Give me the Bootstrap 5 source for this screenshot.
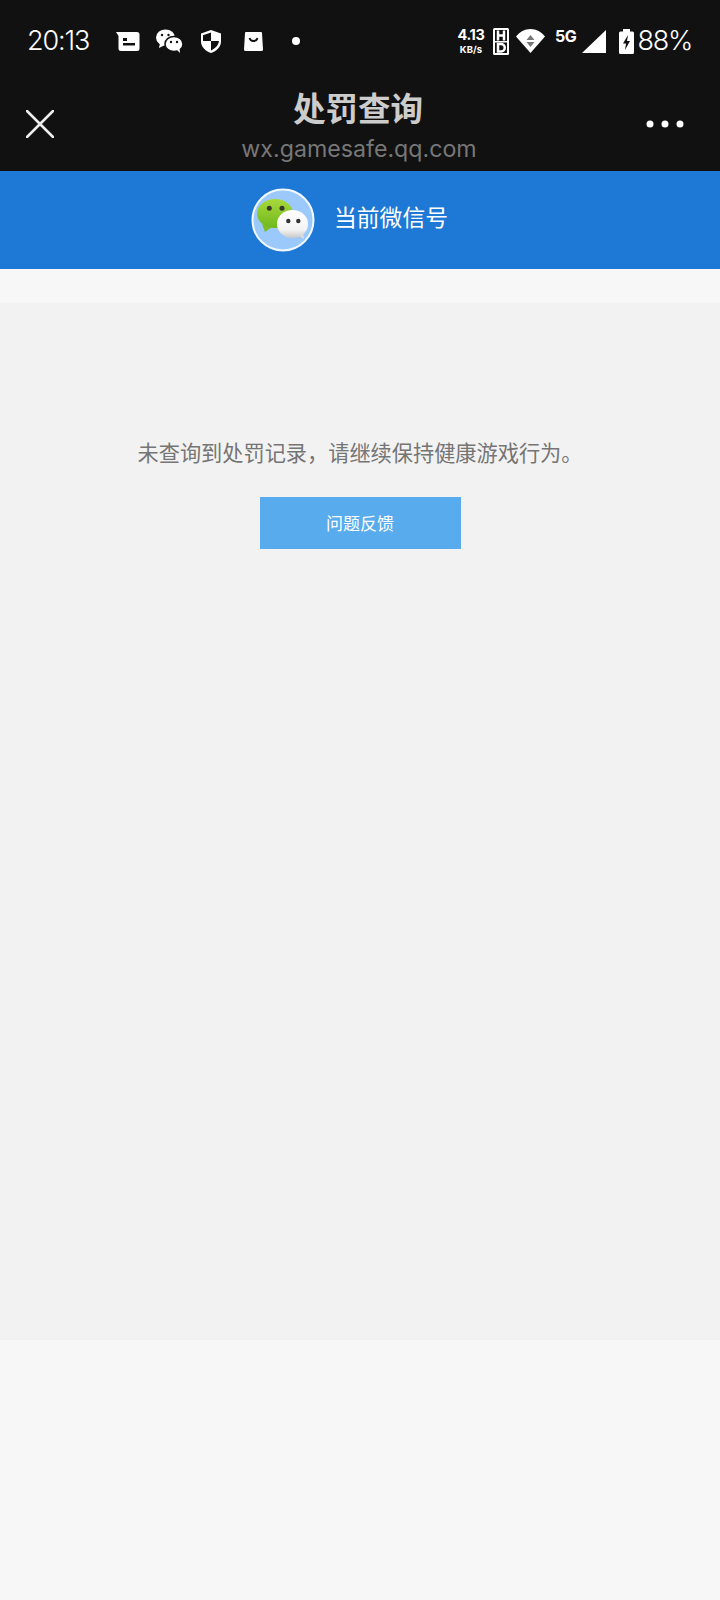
<!DOCTYPE html>
<html lang="zh-CN">
<head>
    <meta charset="UTF-8">
    <meta name="viewport" content="width=device-width, initial-scale=1.0">
    <title>处罚查询</title>
    <link href="https://cdn.jsdelivr.net/npm/bootstrap@5.3.2/dist/css/bootstrap.min.css" rel="stylesheet">
    <style>
        body {
            background: #f7f7f7;
            font-family: "Noto Sans CJK SC", "Noto Sans", sans-serif;
            min-height: 1600px;
        }
        svg { display: block; flex: none; }
        .top-dark { background: #111; height: 171px; }
        .status-row { height: 82px; padding: 0 28px 0 27px; color: #fff; font-family: Inter, sans-serif; }
        .clock { font-size: 27px; font-weight: 300; letter-spacing: -1.1px; width: 89px; }
        .speed { width: 32px; margin-right: 6px; line-height: 1; text-align: center; font-weight: 700; }
        .speed-num { font-size: 14.5px; letter-spacing: -.4px; }
        .speed-unit { font-size: 9.5px; margin-top: 3px; }
        .net-5g { font-size: 16px; font-weight: 700; margin-top: -11px; letter-spacing: -.3px; margin-right: 5px; margin-left: 10px; }
        .battery-pct { font-size: 27px; font-weight: 300; letter-spacing: -1.3px; margin-left: 4px; }
        .shield-icon { margin-left: 18px; }
        .bag-icon { margin-left: 23px; }
        .status-dot { margin-left: 29px; }
        .charge-icon { margin-left: 13px; }
        .wifi-icon { margin-left: 7px; }
        .app-row { display: grid; grid-template-columns: 1fr auto 1fr; height: 89px; padding: 0 36px 0 26px; }
        .app-icon { margin-top: -5px; }
        .page-title { font-size: 32.5px; font-weight: 700; color: #ccc; line-height: 40px; margin-top: 5px; text-align: center; margin-right: 2px; }
        .page-host { font-family: Inter, sans-serif; font-size: 23.2px; color: #777; line-height: 32px; margin-top: 6px; text-align: center; }
        .account-band { background: #1e78d6; height: 98px; padding-right: 21px; }
        .account-name { font-size: 22.8px; color: #fff; margin-left: 19px; margin-top: -6px; line-height: 1; }
        .gap-band { height: 34px; }
        .result-panel { background: #f2f2f2; height: 1037px; padding-top: 131px; }
        .result-text { font-size: 21.2px; line-height: 36px; color: #757575; margin-bottom: 27px; }
        .feedback-btn { width: 201px; height: 52px; background: #58abed; color: #fff; font-size: 17px; border: 0; border-radius: 0; padding: 0; }
        .feedback-btn:hover { background: #58abed; color: #fff; }
    </style>
</head>
<body>
    <div class="top-dark">
        <div class="status-row d-flex align-items-center">
            <div class="clock">20:13</div>
            <svg width="24" height="19" viewBox="0 0 24 19"><path d="M0 0h21a2.500 2.500 0 0 1 2.500 2.500v14a2.500 2.500 0 0 1-2.500 2.500H5a2.500 2.500 0 0 1-2.500-2.500V4z" fill="#fff"/><rect x="7" y="6" width="4" height="3" fill="#111"/><rect x="7" y="11" width="12" height="2.500" fill="#111"/></svg>
            <svg class="ms-3" width="27" height="24" viewBox="0 0 27 24"><ellipse cx="9.500" cy="8.500" rx="9.500" ry="8" fill="#fff"/><path d="M4 14l-1 5 6-3z" fill="#fff"/><ellipse cx="18" cy="15" rx="9" ry="7.500" fill="#fff" stroke="#111" stroke-width="1.500"/><path d="M21 21l3 3-.5-5z" fill="#fff"/><circle cx="6" cy="6" r="1.200" fill="#111"/><circle cx="12.500" cy="6" r="1.200" fill="#111"/><circle cx="15" cy="13" r="1.200" fill="#111"/><circle cx="21" cy="13" r="1.200" fill="#111"/></svg>
            <svg class="shield-icon" width="20" height="23" viewBox="0 0 20 23"><path d="M10 0l10 3.500v8c0 5.500-4.500 9.500-10 11.500C4.500 21 0 17 0 11.500v-8z" fill="#fff"/><path d="M10 2.500l-8 2.800v5.700h8zM10 11h8c-.5 4.500-4 7.500-8 9.500z" fill="#111"/></svg>
            <svg class="bag-icon" width="19" height="19" viewBox="0 0 19 19"><path d="M2 0h15a1 1 0 0 1 1 1l1 16.500a1.500 1.500 0 0 1-1.500 1.500h-16A1.500 1.500 0 0 1 0 17.500L1 1a1 1 0 0 1 1-1z" fill="#fff"/><path d="M5.500 6c1 4 7 4 8 0" fill="none" stroke="#111" stroke-width="1.800"/></svg>
            <svg class="status-dot" width="8" height="8" viewBox="0 0 8 8"><circle cx="4" cy="4" r="4" fill="#fff"/></svg>
            <div class="ms-auto d-flex align-items-center">
                <div class="speed">
                    <div class="speed-num">4.13</div>
                    <div class="speed-unit">KB/s</div>
                </div>
                <svg width="16" height="27" viewBox="0 0 16 27"><rect width="16" height="27" rx="1.500" fill="#fff"/><path d="M2 2h12v11H2zM2 14.500h12V25H2z" fill="#111"/><path d="M5 2.500v10M11 2.500v10M5 7.500h6" stroke="#fff" stroke-width="2.500" fill="none"/><path d="M5 16h3a3.500 3.500 0 0 1 0 7.500H5z" fill="none" stroke="#fff" stroke-width="2.500"/></svg>
                <svg class="wifi-icon" width="29" height="24" viewBox="0 0 29 24"><path d="M0 7.500C3.500 3 8.500 0 14.500 0S25.500 3 29 7.500L14.500 24z" fill="#fff"/><path d="M14.500 6l4 5h-8zM14.500 18l-4-5h8z" fill="#777"/></svg>
                <div class="net-5g">5G</div>
                <svg width="24" height="23" viewBox="0 0 24 23"><path d="M24 0v23H0z" fill="#fff"/></svg>
                <svg class="charge-icon" width="15" height="25" viewBox="0 0 15 25"><path d="M4 0h7v2.500h2.500A1.500 1.500 0 0 1 15 4v19.500a1.500 1.500 0 0 1-1.500 1.500h-12A1.500 1.500 0 0 1 0 23.500V4a1.500 1.500 0 0 1 1.500-1.500H4z" fill="#fff"/><path d="M9 6L4 14.500h3L6 21l5-9H8z" fill="#111"/></svg>
                <div class="battery-pct">88%</div>
            </div>
        </div>
        <div class="app-row">
            <svg class="app-icon align-self-center" width="28" height="28" viewBox="0 0 28 28"><path d="M1 1l26 26M27 1L1 27" stroke="#eee" stroke-width="2.500" stroke-linecap="round"/></svg>
            <div class="ps-2">
                <div class="page-title">处罚查询</div>
                <div class="page-host">wx.gamesafe.qq.com</div>
            </div>
            <svg class="app-icon align-self-center ms-auto" width="38" height="8" viewBox="0 0 38 8"><circle cx="4" cy="4" r="3.500" fill="#fff"/><circle cx="19" cy="4" r="3.500" fill="#fff"/><circle cx="34" cy="4" r="3.500" fill="#fff"/></svg>
        </div>
    </div>

    <div class="account-band d-flex align-items-center justify-content-center">
        <svg width="64" height="64" viewBox="0 0 64 64">
            <defs>
                <linearGradient id="greenFill" x1="0" y1="0" x2="0" y2="1"><stop offset="0" stop-color="#a8d93a"/><stop offset="1" stop-color="#6fb81e"/></linearGradient>
                <linearGradient id="whiteFill" x1="0" y1="0" x2="0" y2="1"><stop offset="0" stop-color="#fff"/><stop offset=".7" stop-color="#f4f4f4"/><stop offset="1" stop-color="#c8c8c8"/></linearGradient>
            </defs>
            <circle cx="32" cy="32" r="30.500" fill="#9cc9fb" stroke="#f2f8ff" stroke-width="2"/>
            <path d="M11 36l3 8 7-5z" fill="#7cbc24"/>
            <ellipse cx="24" cy="25.500" rx="18" ry="14.500" fill="url(#greenFill)"/>
            <circle cx="18.300" cy="20.300" r="2.500" fill="#3a3a2a"/>
            <circle cx="31" cy="20.300" r="2.500" fill="#3a3a2a"/>
            <path d="M46 47l7 4-1-8z" fill="#dcdcdc"/>
            <ellipse cx="41.500" cy="36" rx="15.500" ry="14" fill="url(#whiteFill)"/>
            <circle cx="37.300" cy="33" r="2.200" fill="#333"/>
            <circle cx="47.300" cy="33" r="2.200" fill="#333"/>
        </svg>
        <div class="account-name">当前微信号</div>
    </div>
    <div class="gap-band"></div>
    <div class="result-panel text-center">
        <p class="result-text">未查询到处罚记录，请继续保持健康游戏行为。</p>
        <button type="button" class="btn feedback-btn">问题反馈</button>
    </div>
    <script src="https://cdn.jsdelivr.net/npm/bootstrap@5.3.2/dist/js/bootstrap.bundle.min.js"></script>
</body>
</html>
